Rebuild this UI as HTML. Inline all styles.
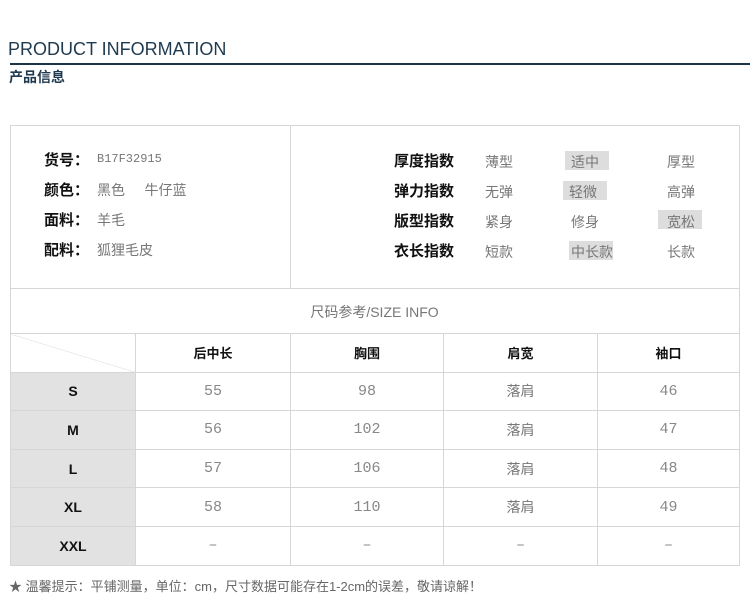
<!DOCTYPE html>
<html><head><meta charset="utf-8"><style>
body{margin:0;width:750px;height:605px;background:#fff;font-family:"Liberation Sans","Noto Sans CJK SC",sans-serif;position:relative;overflow:hidden}
.a{position:absolute;white-space:nowrap}
.lab{font-size:15px;font-weight:bold;color:#111}
.val{font-size:14px;color:#777}
.hl2{position:absolute;background:#ddd}
table{position:absolute;left:10px;top:333px;border-collapse:collapse;table-layout:fixed}
td{border:1px solid #d6d6d6;text-align:center;font-size:14px;color:#777;padding:0;height:37.6px}
td.h{color:#111;font-weight:bold;font-size:13px}
td.s{background:#e2e2e2;color:#111;font-weight:bold;font-size:14px}
td.n{font-family:"Liberation Mono",monospace;color:#888;font-size:15px}
</style></head><body>
<div class="a" style="left:8px;top:39px;font-size:18px;color:#1f3a4f">PRODUCT INFORMATION</div>
<div class="a" style="left:10px;top:63px;width:740px;height:2px;background:#1c3447"></div>
<div class="a" style="left:9px;top:67px;font-size:14px;font-weight:bold;color:#1f3a4f">产品信息</div>
<div class="a" style="left:10px;top:125px;width:728px;height:208px;border:1px solid #d6d6d6;border-bottom:none"></div>
<div class="a" style="left:290px;top:125px;width:1px;height:163px;background:#d6d6d6"></div>
<div class="a" style="left:10px;top:288px;width:729px;height:1px;background:#d6d6d6"></div>
<div class="a lab" style="left:44px;top:149px">货号：</div><div class="a" style="left:97px;top:152px;font-size:12px;font-family:'Liberation Mono',monospace;color:#777">B17F32915</div>
<div class="a lab" style="left:44px;top:179px">颜色：</div><div class="a val" style="left:97px;top:180px">黑色&nbsp;&nbsp;&nbsp;&nbsp;&nbsp;牛仔蓝</div>
<div class="a lab" style="left:44px;top:209px">面料：</div><div class="a val" style="left:97px;top:210px">羊毛</div>
<div class="a lab" style="left:44px;top:239px">配料：</div><div class="a val" style="left:97px;top:240px">狐狸毛皮</div>
<div class="hl2" style="left:565px;top:151px;width:44px;height:19px"></div>
<div class="hl2" style="left:563px;top:181px;width:44px;height:19px"></div>
<div class="hl2" style="left:658px;top:210px;width:44px;height:19px"></div>
<div class="hl2" style="left:569px;top:241px;width:44px;height:19px"></div>
<div class="a lab" style="left:394px;top:150px">厚度指数</div><div class="a val" style="left:485px;top:152px">薄型</div><div class="a val" style="left:571px;top:152px">适中</div><div class="a val" style="left:667px;top:152px">厚型</div>
<div class="a lab" style="left:394px;top:180px">弹力指数</div><div class="a val" style="left:485px;top:182px">无弹</div><div class="a val" style="left:569px;top:182px">轻微</div><div class="a val" style="left:667px;top:182px">高弹</div>
<div class="a lab" style="left:394px;top:210px">版型指数</div><div class="a val" style="left:485px;top:212px">紧身</div><div class="a val" style="left:571px;top:212px">修身</div><div class="a val" style="left:667px;top:212px">宽松</div>
<div class="a lab" style="left:394px;top:240px">衣长指数</div><div class="a val" style="left:485px;top:242px">短款</div><div class="a val" style="left:571px;top:242px">中长款</div><div class="a val" style="left:667px;top:242px">长款</div>
<div class="a" style="left:10px;top:302px;width:729px;text-align:center;font-size:14px;color:#777">尺码参考/SIZE INFO</div>
<table>
<colgroup><col style="width:125px"><col style="width:155px"><col style="width:153px"><col style="width:154px"><col style="width:142px"></colgroup>
<tr><td style="background:linear-gradient(to top right,#fff 49.5%,#ddd 50%,#fff 51%)"></td><td class="h">后中长</td><td class="h">胸围</td><td class="h">肩宽</td><td class="h">袖口</td></tr>
<tr><td class="s">S</td><td class="n">55</td><td class="n">98</td><td>落肩</td><td class="n">46</td></tr>
<tr><td class="s">M</td><td class="n">56</td><td class="n">102</td><td>落肩</td><td class="n">47</td></tr>
<tr><td class="s">L</td><td class="n">57</td><td class="n">106</td><td>落肩</td><td class="n">48</td></tr>
<tr><td class="s">XL</td><td class="n">58</td><td class="n">110</td><td>落肩</td><td class="n">49</td></tr>
<tr><td class="s">XXL</td><td class="n">–</td><td class="n">–</td><td class="n">–</td><td class="n">–</td></tr>
</table>
<div class="a" style="left:9px;top:576px;font-size:13px;color:#666">★ 温馨提示：平铺测量，单位：cm，尺寸数据可能存在1-2cm的误差，敬请谅解！</div>
</body></html>
